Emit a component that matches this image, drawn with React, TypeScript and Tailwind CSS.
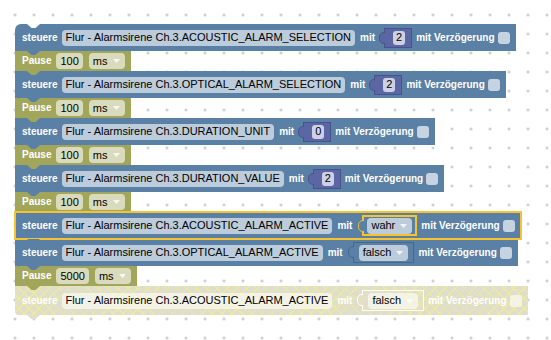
import React from 'react'

type State = 'normal' | 'selected' | 'disabled'

const label = 'text-[10px] font-bold leading-none text-white whitespace-nowrap'

function Arrow() {
  return (
    <svg width="7" height="4" viewBox="0 0 7 4" className="fill-white/80">
      <path d="M0 0 L7 0 L3.5 4 Z" />
    </svg>
  )
}

function Field({ children }: { children: React.ReactNode }) {
  return (
    <div className="flex h-[16px] items-center rounded-[4px] bg-white/60 px-[4px] text-[11px] leading-none text-black whitespace-nowrap">
      {children}
    </div>
  )
}

function Dropdown({ children }: { children: React.ReactNode }) {
  return (
    <div className="flex h-[16px] items-center gap-[5px] rounded-[4px] bg-white/60 pl-[4px] pr-[5px] text-[11px] leading-none text-black whitespace-nowrap">
      {children}
      <Arrow />
    </div>
  )
}

// little notch at the bottom of a block that drops into the next one
function BottomTab({ fill }: { fill: string }) {
  return (
    <svg width="13" height="4" viewBox="0 0 13 4" className={`absolute left-[12px] -bottom-[4px] z-10 ${fill}`}>
      <path d="M0 0 L4.5 4 L8.5 4 L13 0 Z" />
    </svg>
  )
}

// output tab on the left side of a value block
function OutTab({ fill, stroke }: { fill: string; stroke: string }) {
  return (
    <svg width="6" height="12" viewBox="0 0 6 12" className={`absolute -left-[6px] top-[3px] ${fill} ${stroke}`}>
      <path d="M6.5 0.5 C2 0.5 0.5 2 0.5 6 C0.5 10 2 11.5 6.5 11.5" strokeWidth="1" />
    </svg>
  )
}

function NumBlock({ v }: { v: string }) {
  return (
    <div className="relative ml-[5px] flex h-[20px] items-center border border-[#49528a] bg-[#5b67a5] pl-[8px] pr-[6px]">
      <OutTab fill="fill-[#5b67a5]" stroke="stroke-[#49528a]" />
      <div className="flex h-[14px] items-center rounded-[3px] bg-white/70 px-[3px] text-[11px] leading-none text-black">
        {v}
      </div>
    </div>
  )
}

function BoolBlock({ v, state }: { v: string; state: State }) {
  if (state === 'selected') {
    return (
      <div className="relative ml-[6px] flex h-[21px] items-center border-2 border-[#f6c22e] bg-[#5b80a5] px-[3px]">
        <OutTab fill="fill-[#5b80a5]" stroke="stroke-[#f6c22e]" />
        <Dropdown>{v}</Dropdown>
      </div>
    )
  }
  if (state === 'disabled') {
    return (
      <div className="relative ml-[6px] flex h-[21px] items-center border border-white/90 px-[5px]">
        <OutTab fill="fill-[#e1e0c9]" stroke="stroke-white" />
        <Dropdown>{v}</Dropdown>
      </div>
    )
  }
  return (
    <div className="relative ml-[6px] flex h-[21px] items-center border border-[#48688b] bg-[#5b80a5] px-[5px]">
      <OutTab fill="fill-[#5b80a5]" stroke="stroke-[#48688b]" />
      <Dropdown>{v}</Dropdown>
    </div>
  )
}

function SetBlock({
  name,
  value,
  state = 'normal',
  first,
  last,
}: {
  name: string
  value: React.ReactNode
  state?: State
  first?: boolean
  last?: boolean
}) {
  let skin = 'bg-[#5b80a5] h-[27px]'
  if (state === 'selected') skin = 'h-[27px] z-20 bg-[#5b80a5] outline-2 outline-[#f6c22e] -outline-offset-1'
  if (state === 'disabled')
    skin =
      'h-[29px] bg-[#deddce] bg-[repeating-linear-gradient(45deg,#eceb9c_0_1px,transparent_1px_7px),repeating-linear-gradient(-45deg,#eceb9c_0_1px,transparent_1px_7px)]'

  return (
    <div
      className={`relative flex items-center gap-[4px] pl-[7px] pr-[6px] ${skin} ${first ? 'rounded-tl-[6px]' : ''} ${last ? 'rounded-bl-[4px]' : ''}`}
    >
      {first && (
        <svg width="13" height="4" viewBox="0 0 13 4" className="absolute left-[12px] top-0 fill-white">
          <path d="M0 0 L4.5 4 L8.5 4 L13 0 Z" />
        </svg>
      )}
      <span className={label}>steuere</span>
      <Field>{name}</Field>
      <span className={`${label} ml-[1px]`}>mit</span>
      {value}
      <span className={label}>mit Verzögerung</span>
      <div className={`ml-[-1px] h-[12px] w-[12px] rounded-[3px] ${state === 'disabled' ? 'bg-white/60' : 'bg-white/65'}`} />
      <BottomTab fill={state === 'disabled' ? 'fill-[#e0dfc8]' : 'fill-[#5b80a5]'} />
    </div>
  )
}

function PauseBlock({ ms }: { ms: string }) {
  return (
    <div className="relative flex h-[20px] items-center gap-[5px] bg-[#a2a65b] pl-[7px] pr-[6px]">
      <span className={label}>Pause</span>
      <Field>{ms}</Field>
      <div className="ml-[1px]">
        <Dropdown>ms</Dropdown>
      </div>
      <BottomTab fill="fill-[#a2a65b]" />
    </div>
  )
}

export default function App() {
  return (
    <div className="relative h-[340px] w-[551px] overflow-hidden bg-white bg-[radial-gradient(circle,#c4c4c4_1px,transparent_1.5px)] bg-[length:19px_19px] bg-[position:5.5px_5.5px] font-['Liberation_Sans',Arial,sans-serif]">
      <div className="flex flex-col items-start pl-[15px] pt-[24px]">
        <SetBlock first name="Flur - Alarmsirene Ch.3.ACOUSTIC_ALARM_SELECTION" value={<NumBlock v="2" />} />
        <PauseBlock ms="100" />
        <SetBlock name="Flur - Alarmsirene Ch.3.OPTICAL_ALARM_SELECTION" value={<NumBlock v="2" />} />
        <PauseBlock ms="100" />
        <SetBlock name="Flur - Alarmsirene Ch.3.DURATION_UNIT" value={<NumBlock v="0" />} />
        <PauseBlock ms="100" />
        <SetBlock name="Flur - Alarmsirene Ch.3.DURATION_VALUE" value={<NumBlock v="2" />} />
        <PauseBlock ms="100" />
        <SetBlock
          state="selected"
          name="Flur - Alarmsirene Ch.3.ACOUSTIC_ALARM_ACTIVE"
          value={<BoolBlock v="wahr" state="selected" />}
        />
        <SetBlock name="Flur - Alarmsirene Ch.3.OPTICAL_ALARM_ACTIVE" value={<BoolBlock v="falsch" state="normal" />} />
        <PauseBlock ms="5000" />
        <SetBlock
          last
          state="disabled"
          name="Flur - Alarmsirene Ch.3.ACOUSTIC_ALARM_ACTIVE"
          value={<BoolBlock v="falsch" state="disabled" />}
        />
      </div>
    </div>
  )
}
